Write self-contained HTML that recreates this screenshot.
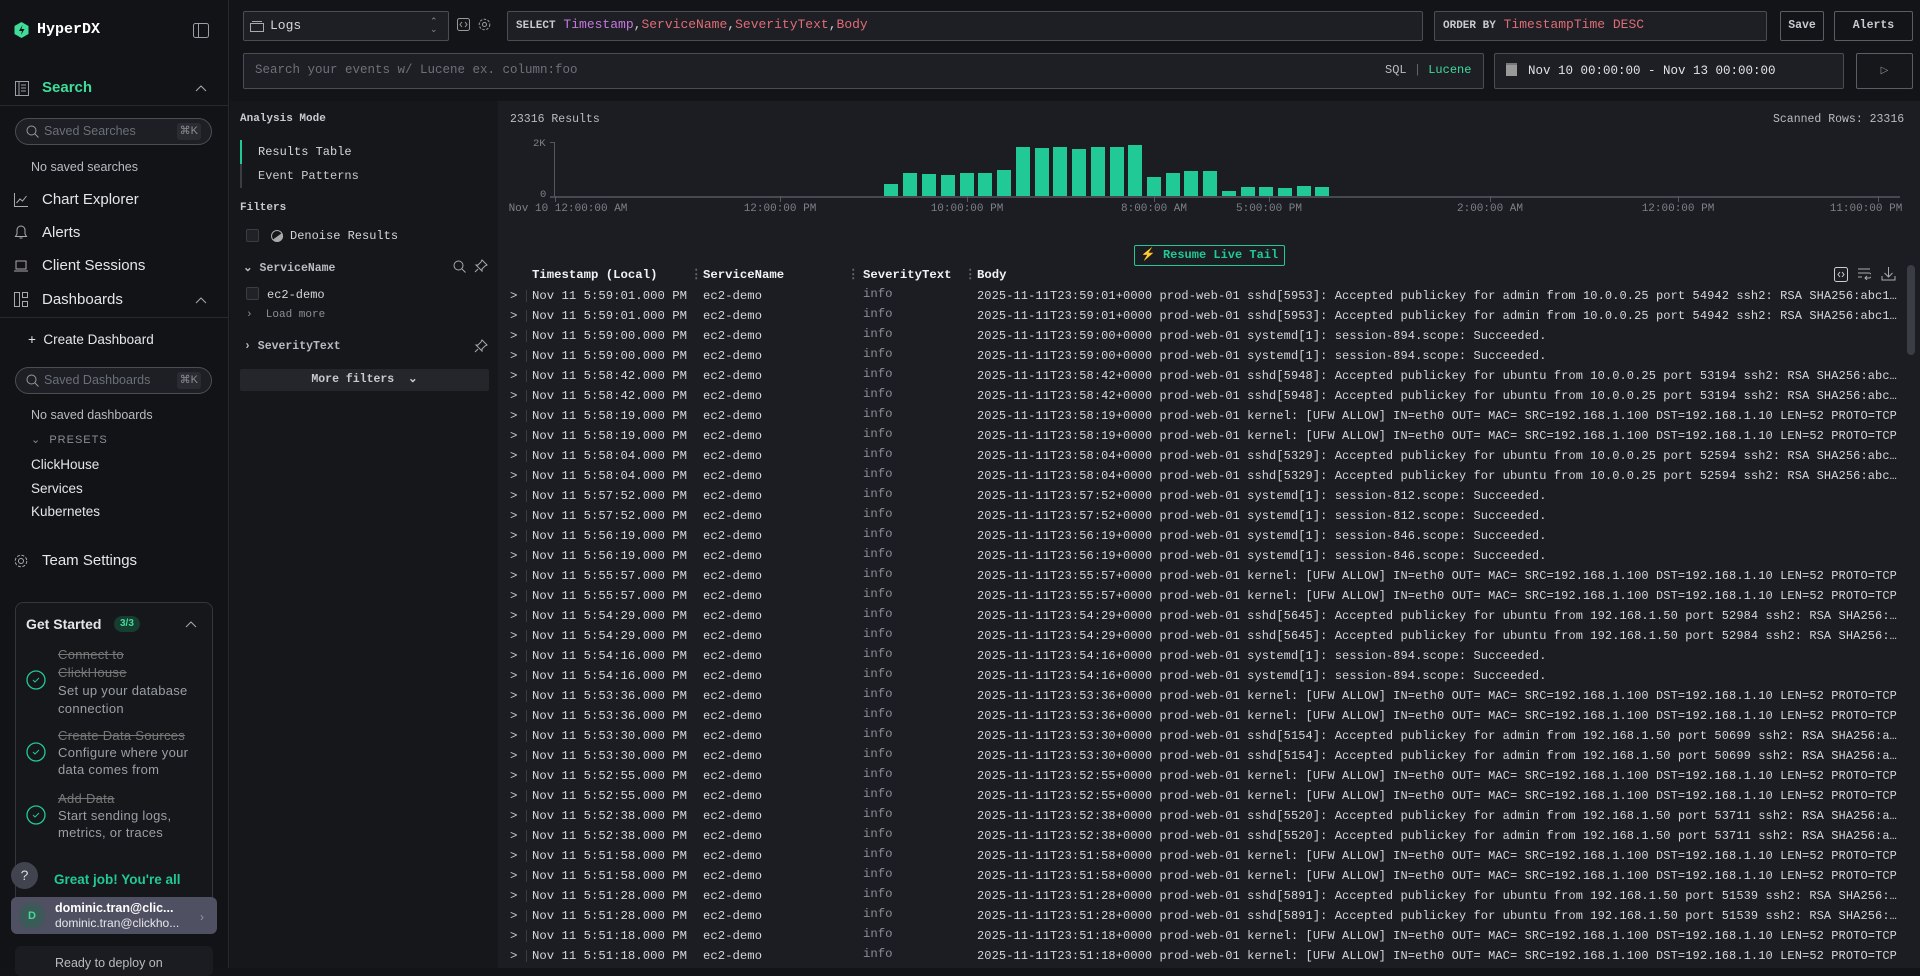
<!DOCTYPE html>
<html><head><meta charset="utf-8">
<style>
*{box-sizing:border-box;margin:0;padding:0}
body{width:1920px;height:968px;overflow:hidden;background:#121418;font-family:"Liberation Sans",sans-serif;color:#d6d8dc;position:relative}
.a{position:absolute}
.mono{font-family:"Liberation Mono",monospace}
.sb{left:0;top:0;width:229px;height:968px;background:#111317;border-right:1px solid #262930}
.nav{position:absolute;left:14px;font-size:15px;color:#e4e6ea;display:flex;align-items:center;gap:14px}
.pill{position:absolute;left:15px;width:197px;height:27px;border:1px solid #4a4d55;border-radius:14px;background:#1d1f24;font-size:12.5px;color:#6b6f78;padding-left:28px;line-height:25px}
.pill .k{position:absolute;right:10px;top:4px;font-size:11px;color:#8a8e96;background:#2a2c32;border-radius:3px;padding:0 3px;line-height:17px}
.box{border:1px solid #4a4d55;background:#1d1f24;border-radius:2px}
.row{position:absolute;left:498px;width:1400px;height:20px;line-height:20px;font-size:12.3px;font-family:"Liberation Mono",monospace;color:#d4d6da;white-space:nowrap}
.row span{position:absolute}
.bar{position:absolute;width:14px;background:#21c996;bottom:772px}
.tl{position:absolute;top:203px;font-size:11px;color:#7c8088;font-family:"Liberation Mono",monospace;transform:translateX(-50%);white-space:nowrap}
.tk{position:absolute;top:196px;width:1px;height:6px;background:#55585f}
.gs{position:absolute;left:58px;font-size:13px;line-height:17px;color:#9a9ea6;width:140px;letter-spacing:.3px}
</style></head><body>
<div class="a sb"></div>
<svg class="a" style="left:14px;top:22px" width="15" height="16" viewBox="0 0 15 16"><path d="M7.5 0L14.5 4v8L7.5 16 .5 12V4z" fill="#3fdc9a"/><path d="M8.5 3L5 9h3l-1 4 3.5-6h-3z" fill="#111317"/></svg>
<div class="a" style="left:37px;top:21px;font-size:15px;font-weight:bold;color:#fff;font-family:'Liberation Mono',monospace">HyperDX</div>
<svg class="a" style="left:193px;top:23px" width="16" height="15"><rect x=".5" y=".5" width="15" height="14" rx="2" fill="none" stroke="#9a9ea6"/><line x1="5.5" y1="1" x2="5.5" y2="14" stroke="#9a9ea6"/></svg>
<svg class="a" style="left:15px;top:81px" width="14" height="15"><rect x=".5" y=".5" width="13" height="14" fill="none" stroke="#9a9ea6"/><path d="M4 1v13M6 4h5M6 7h5M6 10h5" stroke="#9a9ea6"/></svg>
<div class="a" style="left:42px;top:79px;font-size:15px;font-weight:bold;color:#3fdc9a">Search</div>
<svg class="a" style="left:195px;top:84px" width="12" height="8"><path d="M1 7l5-5 5 5" stroke="#aaa" fill="none"/></svg>
<div class="a" style="left:0;top:105px;width:229px;border-top:1px solid #262930"></div>
<div class="pill" style="top:118px"><svg class="a" style="left:10px;top:6px" width="13" height="13"><circle cx="5.5" cy="5.5" r="4.5" stroke="#999" fill="none"/><path d="M9 9l3.5 3.5" stroke="#999"/></svg>Saved Searches<span class="k">⌘K</span></div>
<div class="a" style="left:31px;top:160px;font-size:12.5px;color:#b8bbc1">No saved searches</div>
<div class="nav" style="top:191px"><svg width="14" height="14"><path d="M.5 0v13.5H14M2.5 10l3.5-4 2.5 2 4-5" stroke="#aaa" fill="none"/></svg>Chart Explorer</div>
<div class="nav" style="top:224px"><svg width="14" height="15"><path d="M7 1a4 4 0 0 0-4 4v4l-1.5 2.5h11L11 9V5a4 4 0 0 0-4-4zM5.5 13h3" stroke="#aaa" fill="none"/></svg>Alerts</div>
<div class="nav" style="top:257px"><svg width="14" height="12"><rect x="2" y="1" width="10" height="8" stroke="#aaa" fill="none"/><path d="M0 11h14" stroke="#aaa"/></svg>Client Sessions</div>
<div class="nav" style="top:291px"><svg width="14" height="15"><rect x=".5" y=".5" width="5" height="14" stroke="#aaa" fill="none"/><rect x="8.5" y=".5" width="5" height="5" stroke="#aaa" fill="none"/><rect x="8.5" y="9.5" width="5" height="5" stroke="#aaa" fill="none"/></svg>Dashboards</div>
<svg class="a" style="left:195px;top:296px" width="12" height="8"><path d="M1 7l5-5 5 5" stroke="#aaa" fill="none"/></svg>
<div class="a" style="left:0;top:317px;width:229px;border-top:1px solid #262930"></div>
<div class="a" style="left:28px;top:332px;font-size:13.5px;color:#e4e6ea">+&nbsp;&nbsp;Create Dashboard</div>
<div class="pill" style="top:367px"><svg class="a" style="left:10px;top:6px" width="13" height="13"><circle cx="5.5" cy="5.5" r="4.5" stroke="#999" fill="none"/><path d="M9 9l3.5 3.5" stroke="#999"/></svg>Saved Dashboards<span class="k">⌘K</span></div>
<div class="a" style="left:31px;top:408px;font-size:12.5px;color:#b8bbc1">No saved dashboards</div>
<div class="a" style="left:31px;top:433px;font-size:11px;color:#8a8e96;letter-spacing:1px">⌄&nbsp; PRESETS</div>
<div class="a" style="left:31px;top:457px;font-size:13.5px;color:#e4e6ea">ClickHouse</div>
<div class="a" style="left:31px;top:481px;font-size:13.5px;color:#e4e6ea">Services</div>
<div class="a" style="left:31px;top:504px;font-size:13.5px;color:#e4e6ea">Kubernetes</div>
<div class="nav" style="top:552px"><svg width="14" height="14"><circle cx="7" cy="7" r="2.5" stroke="#aaa" fill="none"/><circle cx="7" cy="7" r="5.8" stroke="#aaa" fill="none" stroke-dasharray="3 1.6"/></svg>Team Settings</div>
<div class="a" style="left:15px;top:602px;width:198px;height:330px;border:1px solid #33363d;border-radius:8px;background:#15171b"></div>
<div class="a" style="left:26px;top:616px;font-size:14px;font-weight:bold;color:#e4e6ea">Get Started</div>
<div class="a" style="left:114px;top:616px;font-size:10px;font-weight:bold;color:#3fdc9a;background:#173d30;border-radius:8px;padding:0 6px;line-height:16px">3/3</div>
<svg class="a" style="left:185px;top:620px" width="12" height="8"><path d="M1 7l5-5 5 5" stroke="#aaa" fill="none"/></svg>
<div class="gs" style="top:646px;line-height:18px"><s style="color:#777">Connect to<br>ClickHouse</s><br>Set up your database connection</div>
<div class="gs" style="top:727px"><s style="color:#777;white-space:nowrap">Create Data Sources</s><br>Configure where your data comes from</div>
<div class="gs" style="top:790px"><s style="color:#777">Add Data</s><br>Start sending logs, metrics, or traces</div>
<svg class="a" style="left:26px;top:670px" width="20" height="20"><circle cx="10" cy="10" r="9" stroke="#21c996" fill="none" stroke-width="1.3"/><path d="M7 10l2 2 4-4" stroke="#21c996" fill="none"/></svg>
<svg class="a" style="left:26px;top:742px" width="20" height="20"><circle cx="10" cy="10" r="9" stroke="#21c996" fill="none" stroke-width="1.3"/><path d="M7 10l2 2 4-4" stroke="#21c996" fill="none"/></svg>
<svg class="a" style="left:26px;top:805px" width="20" height="20"><circle cx="10" cy="10" r="9" stroke="#21c996" fill="none" stroke-width="1.3"/><path d="M7 10l2 2 4-4" stroke="#21c996" fill="none"/></svg>
<div class="a" style="left:54px;top:872px;font-size:13.5px;font-weight:bold;color:#21c996">Great job! You're all</div>
<div class="a" style="left:11px;top:862px;width:27px;height:27px;border-radius:50%;background:#41434e;color:#ddd;font-size:14px;text-align:center;line-height:27px">?</div>
<div class="a" style="left:11px;top:897px;width:206px;height:37px;border-radius:6px;background:#4f5062"></div>
<div class="a" style="left:19px;top:903px;width:26px;height:26px;border-radius:50%;background:#3c5a58;color:#3fdc9a;font-size:11px;font-weight:bold;text-align:center;line-height:26px">D</div>
<div class="a" style="left:55px;top:901px;font-size:12.5px;font-weight:bold;color:#fff">dominic.tran@clic...</div>
<div class="a" style="left:55px;top:916px;font-size:12px;color:#e8e8ee">dominic.tran@clickho...</div>
<div class="a" style="left:200px;top:910px;color:#999;font-size:12px">›</div>
<div class="a" style="left:15px;top:946px;width:198px;height:30px;border-radius:6px;background:#1a1c21"></div>
<div class="a" style="left:55px;top:956px;font-size:12.5px;color:#bbb">Ready to deploy on</div>

<div class="a box" style="left:243px;top:11px;width:206px;height:30px"></div>
<svg class="a" style="left:250px;top:20px" width="14" height="12"><rect x=".5" y="3.5" width="13" height="8" stroke="#aaa" fill="none"/><path d="M2 1.5h10" stroke="#aaa"/></svg>
<div class="a" style="left:270px;top:18px;font-size:13px;color:#d4d6da;font-family:'Liberation Mono',monospace">Logs</div>
<div class="a" style="left:430px;top:17px;font-size:9px;color:#888;line-height:8px">⌃<br>⌄</div>
<svg class="a" style="left:457px;top:18px" width="13" height="13"><rect x=".5" y=".5" width="12" height="12" rx="2" stroke="#999" fill="none"/><path d="M5 4L3 6.5 5 9M8 4l2 2.5L8 9" stroke="#999" fill="none"/></svg>
<svg class="a" style="left:478px;top:18px" width="13" height="13"><circle cx="6.5" cy="6.5" r="2" stroke="#999" fill="none"/><circle cx="6.5" cy="6.5" r="5.3" stroke="#999" fill="none" stroke-dasharray="2.5 1.5"/></svg>
<div class="a box" style="left:507px;top:11px;width:916px;height:30px"></div>
<div class="a mono" style="left:516px;top:17px;font-size:13px;white-space:pre"><b style="color:#c8cad0;font-size:11px">SELECT</b> <span style="color:#c678dd">Timestamp</span><span style="color:#ccc">,</span><span style="color:#e06c75">ServiceName</span><span style="color:#ccc">,</span><span style="color:#e06c75">SeverityText</span><span style="color:#ccc">,</span><span style="color:#e06c75">Body</span></div>
<div class="a box" style="left:1434px;top:11px;width:333px;height:30px"></div>
<div class="a mono" style="left:1443px;top:17px;font-size:13px;white-space:pre"><b style="color:#c8cad0;font-size:11px">ORDER BY</b> <span style="color:#e06c75">TimestampTime DESC</span></div>
<div class="a" style="left:1780px;top:11px;width:44px;height:30px;border:1px solid #5a5d65;border-radius:2px;font-size:11.5px;font-weight:bold;color:#c8cad0;text-align:center;line-height:28px;font-family:'Liberation Mono',monospace">Save</div>
<div class="a" style="left:1834px;top:11px;width:79px;height:30px;border:1px solid #5a5d65;border-radius:2px;font-size:11.5px;font-weight:bold;color:#c8cad0;text-align:center;line-height:28px;font-family:'Liberation Mono',monospace">Alerts</div>
<div class="a box" style="left:243px;top:53px;width:1241px;height:36px"></div>
<div class="a mono" style="left:255px;top:63px;font-size:12.5px;color:#6d7179">Search your events w/ Lucene ex. column:foo</div>
<div class="a mono" style="left:1385px;top:63px;font-size:12px;color:#bbb">SQL <span style="color:#666">|</span> <span style="color:#3fdc9a">Lucene</span></div>
<div class="a box" style="left:1494px;top:53px;width:350px;height:36px"></div>
<svg class="a" style="left:1506px;top:63px" width="11" height="13"><rect x="0" y="2" width="11" height="11" fill="#999"/><rect x="0" y="0" width="11" height="2" fill="#777"/></svg>
<div class="a mono" style="left:1528px;top:64px;font-size:12.5px;color:#e0e2e6">Nov 10 00:00:00 - Nov 13 00:00:00</div>
<div class="a" style="left:1856px;top:53px;width:57px;height:36px;border:1px solid #5a5d65;border-radius:2px;background:#15171b;color:#999;font-size:10px;text-align:center;line-height:34px">▷</div>

<div class="a" style="left:230px;top:101px;width:268px;height:867px;background:#15171b"></div>
<div class="a mono" style="left:240px;top:113px;font-size:11px;font-weight:bold;color:#c8cad0">Analysis Mode</div>
<div class="a" style="left:240px;top:140px;width:2px;height:48px;background:#3a3d44"></div>
<div class="a" style="left:240px;top:140px;width:2px;height:24px;background:#21c996"></div>
<div class="a mono" style="left:258px;top:145px;font-size:12px;color:#d4d6da">Results Table</div>
<div class="a mono" style="left:258px;top:169px;font-size:12px;color:#c8cad0">Event Patterns</div>
<div class="a mono" style="left:240px;top:202px;font-size:11px;font-weight:bold;color:#c8cad0">Filters</div>
<div class="a" style="left:246px;top:229px;width:13px;height:13px;border:1px solid #3a3d44;border-radius:2px;background:#202227"></div>
<svg class="a" style="left:270px;top:229px" width="14" height="14"><circle cx="7" cy="7" r="5.5" stroke="#aaa" fill="none"/><path d="M3 10.5A5.5 5.5 0 0 0 12 4z" fill="#aaa"/></svg>
<div class="a mono" style="left:290px;top:229px;font-size:12px;color:#d4d6da">Denoise Results</div>
<div class="a mono" style="left:243px;top:260px;font-size:11.5px;font-weight:bold;color:#b8bbc1">⌄ ServiceName</div>
<svg class="a" style="left:453px;top:260px" width="13" height="13"><circle cx="5.5" cy="5.5" r="4.5" stroke="#aaa" fill="none"/><path d="M9 9l3.5 3.5" stroke="#aaa"/></svg>
<svg class="a" style="left:474px;top:259px" width="14" height="14"><path d="M8 1l5 5-2 1-3 3 0 2-6-6 2 0 3-3zM4 10L1 13" stroke="#aaa" fill="none"/></svg>
<div class="a" style="left:246px;top:287px;width:13px;height:13px;border:1px solid #3a3d44;border-radius:2px;background:#202227"></div>
<div class="a mono" style="left:267px;top:288px;font-size:12px;color:#d4d6da">ec2-demo</div>
<div class="a mono" style="left:246px;top:309px;font-size:11px;color:#8a8e96">›&nbsp; Load more</div>
<div class="a mono" style="left:244px;top:340px;font-size:11.5px;font-weight:bold;color:#b8bbc1">› SeverityText</div>
<svg class="a" style="left:474px;top:339px" width="14" height="14"><path d="M8 1l5 5-2 1-3 3 0 2-6-6 2 0 3-3zM4 10L1 13" stroke="#aaa" fill="none"/></svg>
<div class="a mono" style="left:240px;top:369px;width:249px;height:22px;background:#24262c;border-radius:2px;font-size:11.5px;font-weight:bold;color:#c8cad0;text-align:center;line-height:22px">More filters&nbsp; ⌄</div>

<div class="a" style="left:498px;top:101px;width:1422px;height:867px;background:#1b1d23"></div>
<div class="a mono" style="left:510px;top:113px;font-size:11.5px;color:#b8bbc1">23316 Results</div>
<div class="a mono" style="left:1773px;top:113px;font-size:11.5px;color:#b8bbc1">Scanned Rows: 23316</div>
<div class="a mono" style="left:533px;top:138px;font-size:10.5px;color:#7c8088">2K</div>
<div class="a mono" style="left:540px;top:189px;font-size:10.5px;color:#7c8088">0</div>
<div class="a" style="left:554px;top:142px;width:1px;height:55px;background:#55585f"></div>
<div class="a" style="left:550px;top:142px;width:5px;height:1px;background:#55585f"></div>
<div class="a" style="left:550px;top:196px;width:1350px;height:2px;background:#46494f"></div>
<div class="tk" style="left:555px"></div><div class="tk" style="left:780px"></div><div class="tk" style="left:967px"></div><div class="tk" style="left:1154px"></div><div class="tk" style="left:1269px"></div><div class="tk" style="left:1490px"></div><div class="tk" style="left:1678px"></div><div class="tk" style="left:1878px"></div>
<div class="a" style="left:0;top:0;width:1920px;height:968px">
<div class="bar" style="left:884px;height:12px"></div>
<div class="bar" style="left:903px;height:23px"></div>
<div class="bar" style="left:922px;height:22px"></div>
<div class="bar" style="left:941px;height:21px"></div>
<div class="bar" style="left:960px;height:23px"></div>
<div class="bar" style="left:978px;height:23px"></div>
<div class="bar" style="left:997px;height:26px"></div>
<div class="bar" style="left:1016px;height:49px"></div>
<div class="bar" style="left:1035px;height:48px"></div>
<div class="bar" style="left:1053px;height:49px"></div>
<div class="bar" style="left:1072px;height:47px"></div>
<div class="bar" style="left:1091px;height:49px"></div>
<div class="bar" style="left:1110px;height:49px"></div>
<div class="bar" style="left:1128px;height:51px"></div>
<div class="bar" style="left:1147px;height:19px"></div>
<div class="bar" style="left:1166px;height:23px"></div>
<div class="bar" style="left:1184px;height:25px"></div>
<div class="bar" style="left:1203px;height:25px"></div>
<div class="bar" style="left:1222px;height:5px"></div>
<div class="bar" style="left:1241px;height:9px"></div>
<div class="bar" style="left:1259px;height:9px"></div>
<div class="bar" style="left:1278px;height:8px"></div>
<div class="bar" style="left:1297px;height:10px"></div>
<div class="bar" style="left:1315px;height:9px"></div>
</div>
<div class="tl" style="left:568px">Nov 10 12:00:00 AM</div>
<div class="tl" style="left:780px">12:00:00 PM</div>
<div class="tl" style="left:967px">10:00:00 PM</div>
<div class="tl" style="left:1154px">8:00:00 AM</div>
<div class="tl" style="left:1269px">5:00:00 PM</div>
<div class="tl" style="left:1490px">2:00:00 AM</div>
<div class="tl" style="left:1678px">12:00:00 PM</div>
<div class="tl" style="left:1866px">11:00:00 PM</div>
<div class="a mono" style="left:1134px;top:245px;width:151px;height:21px;border:1px solid #21c996;border-radius:2px;color:#21c996;font-size:12px;font-weight:bold;text-align:center;line-height:19px">⚡ Resume Live Tail</div>
<div class="row" style="top:265px;font-weight:bold;color:#f0f2f4"><span style="left:34px">Timestamp (Local)</span><span style="left:192px;color:#666">⋮</span><span style="left:205px">ServiceName</span><span style="left:349px;color:#666">⋮</span><span style="left:365px">SeverityText</span><span style="left:466px;color:#666">⋮</span><span style="left:479px">Body</span></div>
<svg class="a" style="left:1834px;top:267px" width="14" height="15"><rect x=".5" y=".5" width="13" height="14" rx="2" stroke="#ccc" fill="none"/><path d="M6 5L4 7.5 6 10M8 5l2 2.5L8 10" stroke="#ccc" fill="none"/></svg>
<svg class="a" style="left:1857px;top:268px" width="14" height="12"><path d="M1 1h12M1 5h11a2.5 2.5 0 0 1 0 5H8M1 9h4M10 8l-2 2 2 2" stroke="#aaa" fill="none"/></svg>
<svg class="a" style="left:1881px;top:266px" width="15" height="15"><path d="M7.5 1v10M3.5 7l4 4 4-4M1 10v4h13v-4" stroke="#aaa" fill="none"/></svg>
<div class="a" style="left:1907px;top:265px;width:8px;height:90px;border-radius:4px;background:#3a3d44"></div>
<div id="rows"></div>
<script>
var K="kernel: [UFW ALLOW] IN=eth0 OUT= MAC= SRC=192.168.1.100 DST=192.168.1.10 LEN=52 PROTO=TCP";
function S(n,u,ip,p){return "sshd["+n+"]: Accepted publickey for "+u+" from "+ip+" port "+p+" ssh2: RSA SHA256:abc123";}
function Y(n){return "systemd[1]: session-"+n+".scope: Succeeded.";}
var d=[["5:59:01","23:59:01",S(5953,"admin","10.0.0.25",54942)],["5:59:00","23:59:00",Y(894)],["5:58:42","23:58:42",S(5948,"ubuntu","10.0.0.25",53194)],["5:58:19","23:58:19",K],["5:58:04","23:58:04",S(5329,"ubuntu","10.0.0.25",52594)],["5:57:52","23:57:52",Y(812)],["5:56:19","23:56:19",Y(846)],["5:55:57","23:55:57",K],["5:54:29","23:54:29",S(5645,"ubuntu","192.168.1.50",52984)],["5:54:16","23:54:16",Y(894)],["5:53:36","23:53:36",K],["5:53:30","23:53:30",S(5154,"admin","192.168.1.50",50699)],["5:52:55","23:52:55",K],["5:52:38","23:52:38",S(5520,"admin","192.168.1.50",53711)],["5:51:58","23:51:58",K],["5:51:28","23:51:28",S(5891,"ubuntu","192.168.1.50",51539)],["5:51:18","23:51:18",K]];
var h="",i=0;
d.forEach(function(r){for(var j=0;j<2;j++){var t=286+i*20;i++;
h+='<div class="row" style="top:'+t+'px"><span style="left:12px;color:#ccc">&gt;</span><span style="left:28px;top:4px;width:1px;height:12px;background:#3a3d44"></span><span style="left:34px">Nov 11 '+r[0]+'.000 PM</span><span style="left:205px">ec2-demo</span><span style="left:365px;color:#8a8e96;top:-2px">info</span><span style="left:479px;width:920px;overflow:hidden;text-overflow:ellipsis;font-size:12px;letter-spacing:.1px">2025-11-11T'+r[1]+'+0000 prod-web-01 '+r[2]+'</span></div>';}});
document.getElementById("rows").innerHTML=h;
</script>
</body></html>
